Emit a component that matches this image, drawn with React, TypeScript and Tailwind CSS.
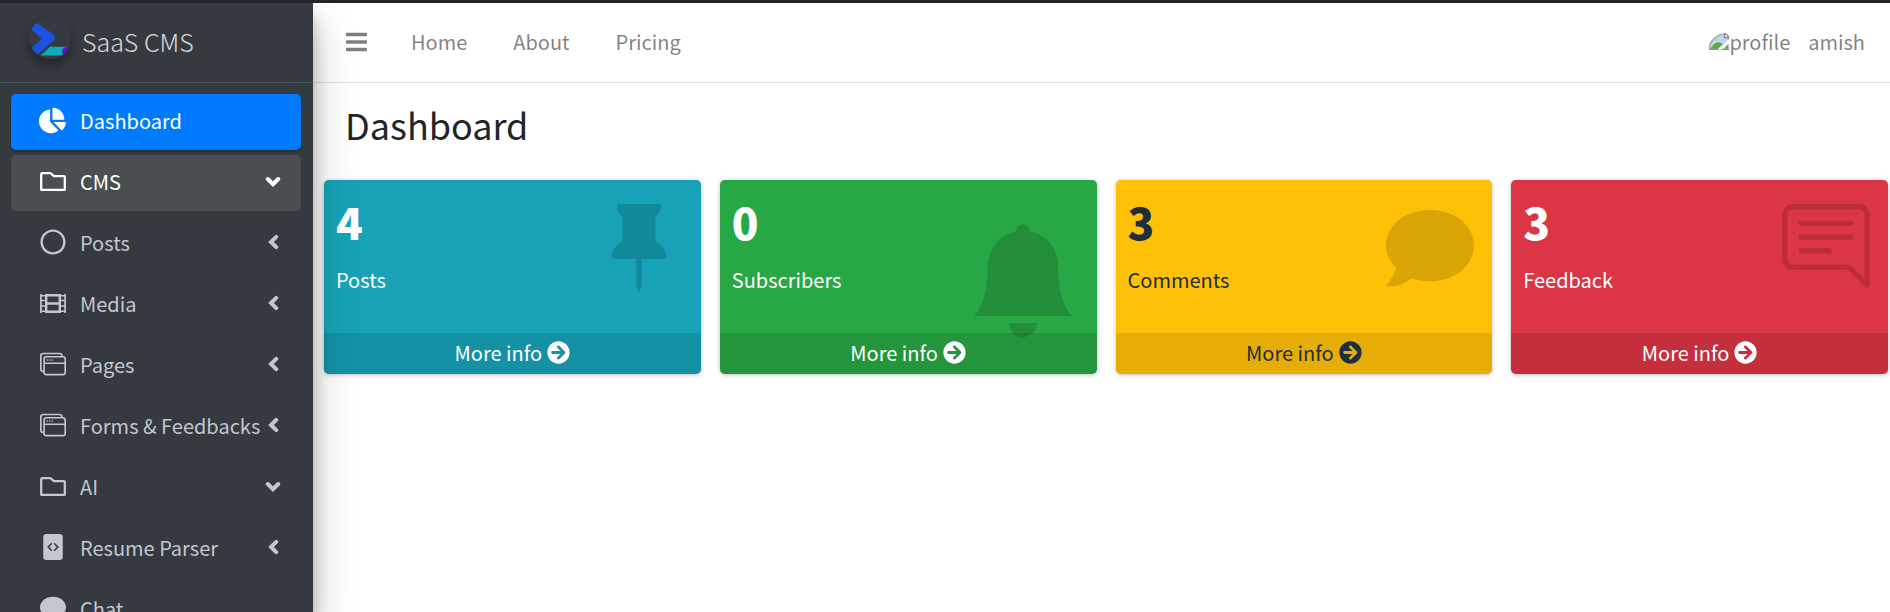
import type { ReactNode } from "react";
import { FaChartPie, FaRegCircle, FaArrowCircleRight, FaBars, FaComment } from "react-icons/fa";
import { BsWindowStack, BsFileCodeFill, BsPinFill, BsChatRightText } from "react-icons/bs";

function Logo() {
  return (
    <svg viewBox="0 0 42 42" className="size-[42px] rounded-full shadow-[0_8px_12px_rgba(0,0,0,0.2),0_4px_8px_rgba(0,0,0,0.18)]" aria-hidden="true">
      <path d="M7.7 5.7L24.3 17.2Q27.6 20.3 24.8 23.4L8.3 37.8Q4.5 35 2.8 30.5L12.4 21.7L2.3 12.6Q4 8.6 7.7 5.7Z" fill="#1a53e0" />
      <path d="M21 29.8H38.5L34.5 38.6H11.8Z" fill="#0eacbd" />
      <path d="M40 29.8Q38.8 34.5 35 38Q32.6 36.6 33.2 33.4Q34.2 30.6 37 29.8Z" fill="#6412cf" />
    </svg>
  );
}

function FolderIcon() {
  return (
    <svg viewBox="0 0 26 19" className="w-[26px]" fill="none" stroke="currentColor" strokeWidth="2.3" strokeLinejoin="round" aria-hidden="true">
      <path d="M2.2 1.2H10.4L14 4.2H23.8Q24.8 4.2 24.8 5.2V17.8H1.2V2.2Q1.2 1.2 2.2 1.2Z" />
    </svg>
  );
}

function FilmIcon() {
  return (
    <svg viewBox="0 0 26 19" className="w-[26px]" fill="none" stroke="currentColor" aria-hidden="true">
      <path d="M0.9 0V19M25.1 0V19" strokeWidth="1.7" />
      <path d="M6.2 0V19M19.8 0V19" strokeWidth="2.4" />
      <path d="M5.2 1.2H20.8M5.2 9.5H20.8M5.2 17.8H20.8" strokeWidth="2.4" />
      <path d="M1 1.7H6M1 6.5H6M1 12H6M1 17.3H6M20 1.7H25M20 6.5H25M20 12H25M20 17.3H25" strokeWidth="1.6" />
    </svg>
  );
}

function AngleLeft() {
  return (
    <svg viewBox="0 0 11 16" className="w-[11px]" fill="none" stroke="currentColor" strokeWidth="4" strokeLinecap="round" aria-hidden="true">
      <path d="M8.200 2.800L3 8L8.200 13.200" />
    </svg>
  );
}

function AngleDown() {
  return (
    <svg viewBox="0 0 16 11" className="w-4" fill="none" stroke="currentColor" strokeWidth="4" strokeLinecap="round" aria-hidden="true">
      <path d="M2.800 3L8 8.200L13.200 3" />
    </svg>
  );
}

function BellIcon() {
  return (
    <svg viewBox="0 0 98 113" className="w-[98px]" fill="currentColor" aria-hidden="true">
      <path d="M0 92C9 83 13.2 66 13.7 44C13.7 24 26 10.500 42 7.500A7 7 0 0 1 56 7.500C72 10.500 84 24 84 42C84.500 66 89 83 98 92Z" />
      <path d="M35 99H63A14 14 0 0 1 35 99Z" />
    </svg>
  );
}

function BubbleIcon() {
  return (
    <svg viewBox="0 0 88 77" className="w-[88px]" fill="currentColor" aria-hidden="true">
      <path d="M44 0C69 0 88 15.500 88 35.500S69 71.300 44 71.300Q34 71.300 25.500 68.300Q14 77.500 0.800 76.300Q-0.200 76 0.400 75Q7.500 68 10.300 57.800Q0 48.500 0 35.500C0 15.500 19 0 44 0Z" />
    </svg>
  );
}

type Item = { label: string; icon: ReactNode; arrow?: "left" | "down"; tone?: string };

const items: Item[] = [
  { label: "Dashboard", icon: <FaChartPie className="size-[27px]" />, tone: "bg-[#007bff] text-white shadow-[0_1px_3px_rgba(0,0,0,0.3)]" },
  { label: "CMS", icon: <FolderIcon />, arrow: "down", tone: "bg-[#494e51] text-white" },
  { label: "Posts", icon: <FaRegCircle className="size-[26px]" />, arrow: "left" },
  { label: "Media", icon: <FilmIcon />, arrow: "left" },
  { label: "Pages", icon: <BsWindowStack className="size-[26px]" />, arrow: "left" },
  { label: "Forms & Feedbacks", icon: <BsWindowStack className="size-[26px]" />, arrow: "left" },
  { label: "AI", icon: <FolderIcon />, arrow: "down" },
  { label: "Resume Parser", icon: <BsFileCodeFill className="size-[26px]" />, arrow: "left" },
  { label: "Chat", icon: <FaComment className="size-[26px]" /> },
];

type Card = { value: number; label: string; tone: string; icon: ReactNode; place: string };

const cards: Card[] = [
  { value: 4, label: "Posts", tone: "bg-[#17a2b8] text-white", icon: <BsPinFill className="size-[88px]" />, place: "top-6 right-[18px]" },
  { value: 0, label: "Subscribers", tone: "bg-[#28a745] text-white", icon: <BellIcon />, place: "top-11 right-[25px]" },
  { value: 3, label: "Comments", tone: "bg-[#ffc107] text-[#1f2d3d]", icon: <BubbleIcon />, place: "top-[30px] right-[18px]" },
  { value: 3, label: "Feedback", tone: "bg-[#dc3545] text-white", icon: <BsChatRightText className="size-[88px]" />, place: "top-6 right-[18px]" },
];

function Sidebar() {
  return (
    <aside className="relative z-10 flex w-[313px] shrink-0 flex-col overflow-hidden bg-[#343a40] text-[#c2c7d0] shadow-[0_20px_39px_rgba(0,0,0,0.25),0_14px_14px_rgba(0,0,0,0.22)]">
      <a href="#" className="flex h-20 shrink-0 items-center gap-[11px] border-b border-[#4b545c] pb-[9px] pl-[29px]">
        <Logo />
        <span className="pt-[6px] text-[25px] leading-8 font-light text-white/80">SaaS CMS</span>
      </a>
      <nav className="pt-[11px] pr-3 pl-[11px]">
        <ul className="flex flex-col gap-[5px]">
          {items.map((item) => (
            <li key={item.label}>
              <a href="#" className={`flex h-14 items-center gap-[14px] rounded-[5px] pr-[19px] pb-1 pl-7 ${item.tone ?? ""}`}>
                <span className="flex w-[27px] shrink-0 justify-center">{item.icon}</span>
                <span className="flex-1 pt-[2px] whitespace-nowrap">{item.label}</span>
                <span className="-ml-[14px] flex w-[18px] shrink-0 justify-center">
                  {item.arrow === "left" && <AngleLeft />}
                  {item.arrow === "down" && <AngleDown />}
                </span>
              </a>
            </li>
          ))}
        </ul>
      </nav>
    </aside>
  );
}

function BrokenImage() {
  return (
    <svg viewBox="0 0 20 17" className="w-5" role="img" aria-label="profile">
      <path d="M0 16.500V12Q4 2 14 1L19.500 6V10L12 16.500Z" fill="#c3d3f5" />
      <path d="M0.800 16V12Q4.500 3.500 13.500 1.200" fill="none" stroke="#a5a5a8" strokeWidth="1.200" />
      <path d="M14 0.800H17L19.300 3V6.500M15.500 1V4.500H19" fill="none" stroke="#8b8b8f" strokeWidth="1.300" />
      <path d="M1.500 15.800Q5.500 8.800 10 9.300L13.800 11L9 15.800Z" fill="#55ab36" />
      <path d="M14.500 15.800L19 11.500V15.800Z" fill="#55ab36" />
      <path d="M0 16.300H9.500M12.500 16.300H20V11" fill="none" stroke="#8b8b8f" strokeWidth="1.200" />
      <path d="M10.500 17L20 7.500" stroke="#fff" strokeWidth="2.200" />
    </svg>
  );
}

function Topbar() {
  return (
    <header className="flex h-20 items-center border-b border-[#dee2e6] pr-[25px] pb-[2px] pl-[33px] text-black/50">
      <button type="button" aria-label="Toggle menu" className="mr-11">
        <FaBars className="h-6 w-[21px]" />
      </button>
      <nav className="flex gap-[46px]">
        <a href="#">Home</a>
        <a href="#">About</a>
        <a href="#">Pricing</a>
      </nav>
      <a href="#" className="ml-auto flex items-center">
        <BrokenImage />
        <span className="mr-[18px]">profile</span>
        <span>amish</span>
      </a>
    </header>
  );
}

export default function App() {
  return (
    <div className="flex h-screen flex-col overflow-hidden border-t-[3px] border-[#212529] bg-white font-['Noto_Sans_CJK_SC','Noto_Sans',sans-serif] text-[20px] leading-[30px] text-[#212529]">
      <div className="flex min-h-0 flex-1">
        <Sidebar />
        <div className="min-w-0 flex-1">
          <Topbar />
          <main>
            <h1 className="pt-5 pl-8 text-[36px] leading-[43px]">Dashboard</h1>
            <div className="grid grid-cols-4 gap-[19px] pt-[34px] pr-[2px] pl-[11px]">
              {cards.map((card) => (
                <section key={card.label} className={`relative overflow-hidden rounded-[5px] shadow-[0_0_1px_rgba(0,0,0,0.13),0_1px_4px_rgba(0,0,0,0.25)] ${card.tone}`}>
                  <div className={`absolute text-black/15 ${card.place}`}>{card.icon}</div>
                  <div className="h-[153px] px-3 pt-[15px]">
                    <h3 className="text-[44px] leading-[53px] font-black">{card.value}</h3>
                    <p className="pt-[17px]">{card.label}</p>
                  </div>
                  <a href="#" className="relative flex h-[41px] items-center justify-center gap-[5px] bg-black/10 pb-[2px]">
                    More info
                    <FaArrowCircleRight className="size-[23px]" />
                  </a>
                </section>
              ))}
            </div>
          </main>
        </div>
      </div>
    </div>
  );
}
